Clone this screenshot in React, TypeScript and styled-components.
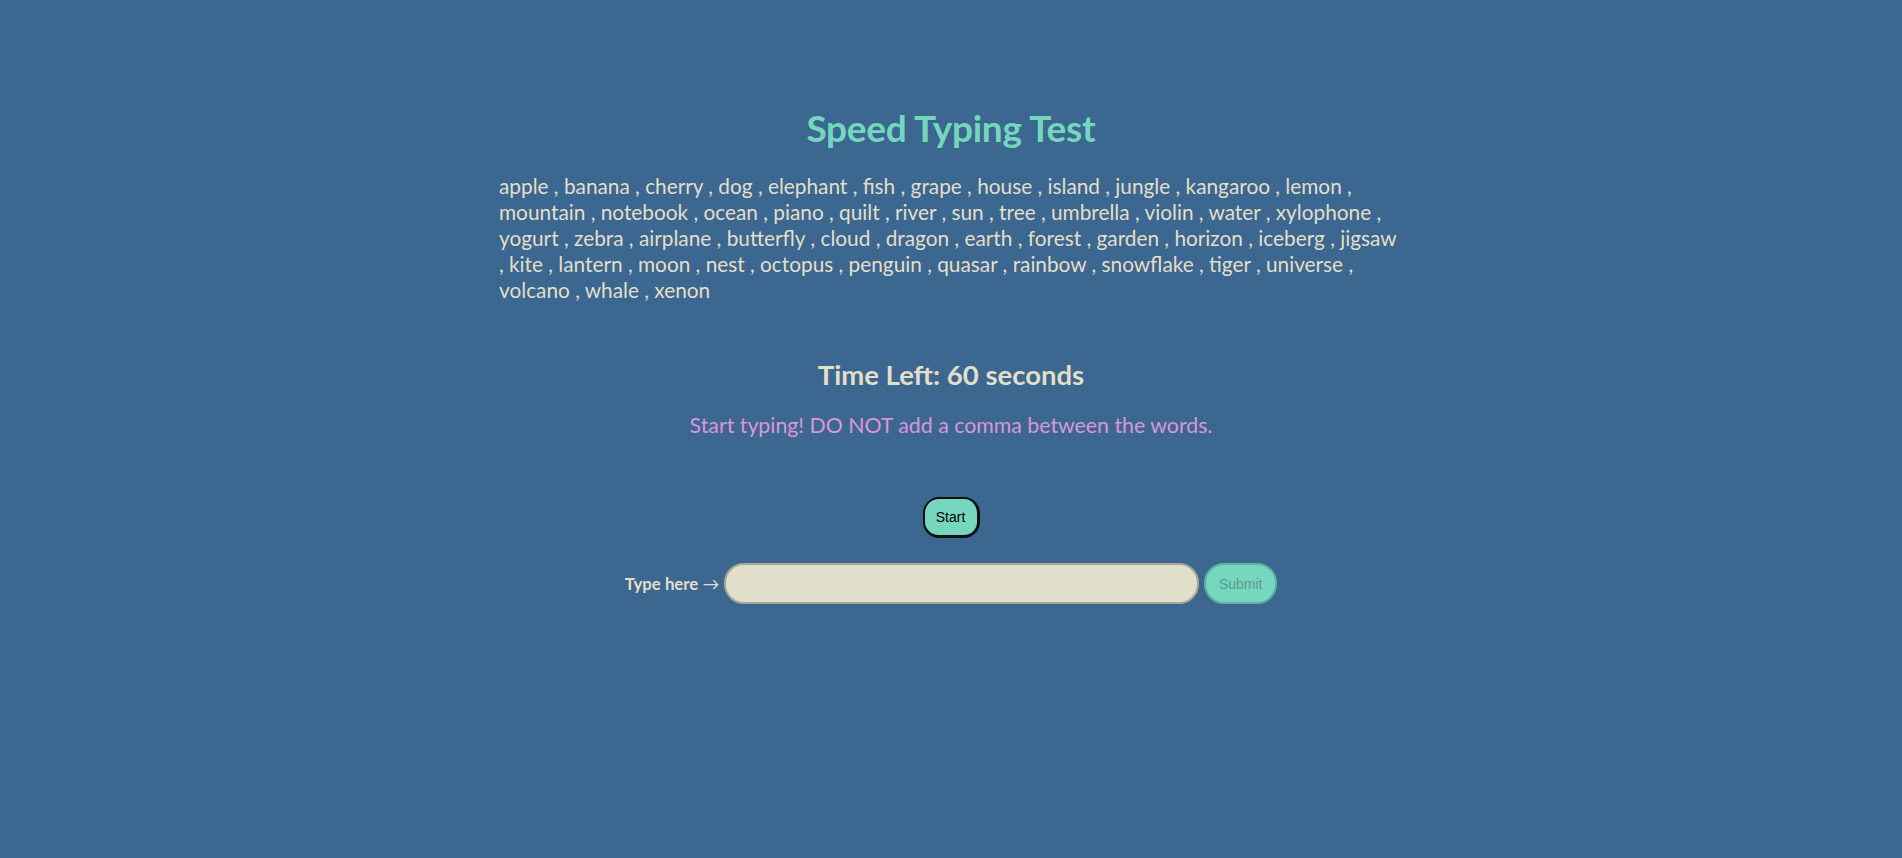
import React from "react";
import styled, { createGlobalStyle } from "styled-components";

const GlobalStyle = createGlobalStyle`
  html, body {
    margin: 0;
    padding: 0;
    background: #3c6790;
  }
  body {
    font-family: "Gill Sans", "Gill Sans MT", Lato, "Noto Sans", sans-serif;
    color: #e2dfc8;
  }
`;

const Page = styled.main`
  display: flex;
  flex-direction: column;
  align-items: center;
  padding-top: 105px;
  min-height: 858px;
  box-sizing: border-box;
`;

const Title = styled.h1`
  margin: 0;
  font-size: 37px;
  line-height: 46px;
  font-weight: 700;
  color: #74d6bd;
  letter-spacing: -0.3px;
`;

const Words = styled.p`
  width: 904px;
  margin: 22px 0 0;
  font-size: 20.8px;
  line-height: 26px;
  color: #e2dfc8;
`;

const Timer = styled.h2`
  margin: 55px 0 0;
  font-size: 27.5px;
  line-height: 34px;
  font-weight: 700;
  color: #e2dfc8;
`;

const Hint = styled.p`
  margin: 20px 0 0;
  font-size: 21.3px;
  line-height: 26px;
  color: #d996dc;
`;

const StartButton = styled.button`
  margin-top: 59px;
  width: 57px;
  height: 41px;
  border-radius: 16px;
  border: 2px solid #111;
  border-right-width: 3px;
  border-bottom-width: 3px;
  background: #76d7be;
  color: #000;
  font-family: "Liberation Sans", Arial, sans-serif;
  font-size: 14px;
  padding: 0;
  cursor: pointer;
`;

const InputRow = styled.div`
  display: flex;
  align-items: center;
  gap: 5px;
  margin-top: 25px;
`;

const Label = styled.label`
  font-size: 16.8px;
  font-weight: 700;
  color: #e2dfc8;
`;

const Arrow = styled.span`
  font-weight: 400;
`;

const TextInput = styled.input`
  width: 475px;
  height: 41px;
  box-sizing: border-box;
  border-radius: 20px;
  border: 2px solid #aaa796;
  background: #e1dfc9;
  outline: none;
  padding: 0 14px;
  font-size: 16px;
`;

const SubmitButton = styled.button`
  width: 73px;
  height: 41px;
  border-radius: 20px;
  border: 2px solid #5fb39e;
  background: #76d7be;
  color: #5b9b8e;
  font-family: "Liberation Sans", Arial, sans-serif;
  font-size: 14px;
  padding: 0;
`;

const words = [
  "apple", "banana", "cherry", "dog", "elephant", "fish", "grape", "house", "island", "jungle",
  "kangaroo", "lemon", "mountain", "notebook", "ocean", "piano", "quilt", "river", "sun", "tree",
  "umbrella", "violin", "water", "xylophone", "yogurt", "zebra", "airplane", "butterfly", "cloud",
  "dragon", "earth", "forest", "garden", "horizon", "iceberg", "jigsaw", "kite", "lantern", "moon",
  "nest", "octopus", "penguin", "quasar", "rainbow", "snowflake", "tiger", "universe", "volcano",
  "whale", "xenon",
];

export default function App() {
  return (
    <>
      <GlobalStyle />
      <Page>
        <Title>Speed Typing Test</Title>
        <Words>{words.join(" , ")}</Words>
        <Timer>Time Left: 60 seconds</Timer>
        <Hint>Start typing! DO NOT add a comma between the words.</Hint>
        <StartButton>Start</StartButton>
        <InputRow>
          <Label htmlFor="typing">
            Type here <Arrow>→</Arrow>
          </Label>
          <TextInput id="typing" type="text" />
          <SubmitButton disabled>Submit</SubmitButton>
        </InputRow>
      </Page>
    </>
  );
}
